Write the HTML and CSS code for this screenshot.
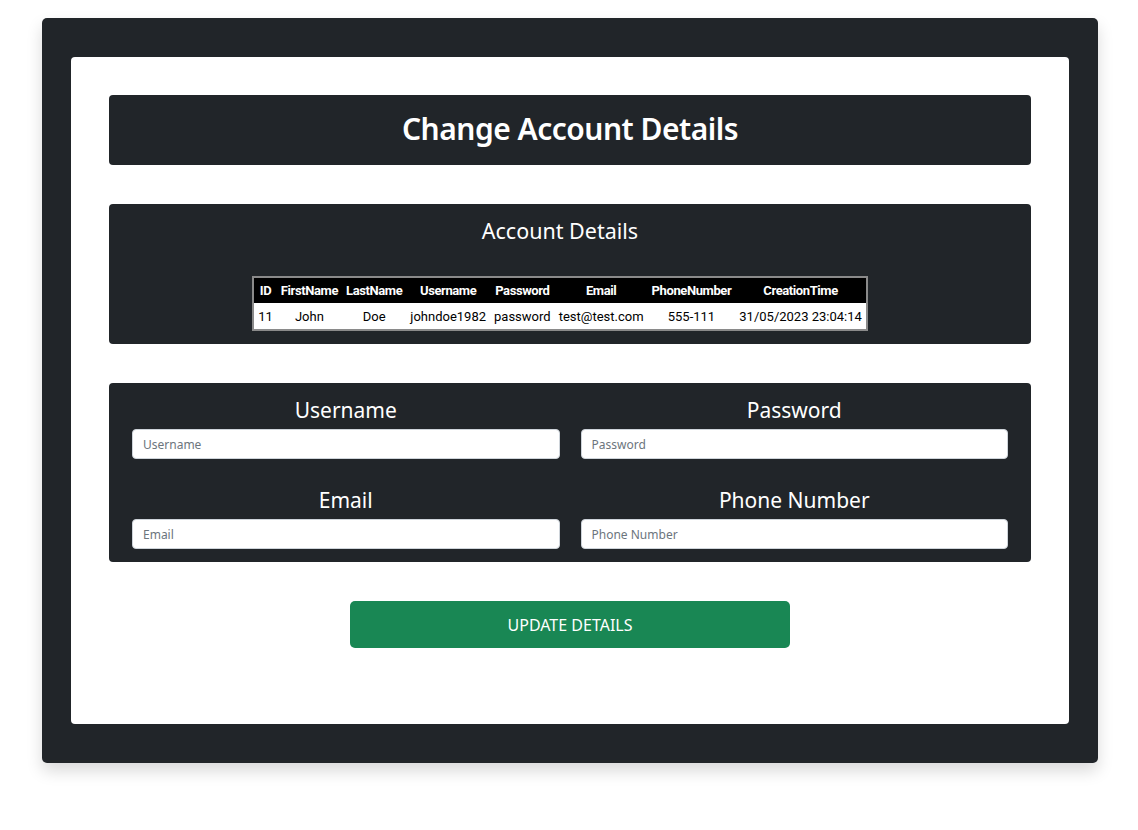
FILE: index.html
```html
<!DOCTYPE html>
<html>
<head>
<meta charset="utf-8">
<link rel="stylesheet" href="styles.css">
</head>
<body>
<div class="outer">
  <div class="inner">
    <div class="title-box"><h1>Change Account Details</h1></div>
    <div class="details-box">
      <h2>Account Details</h2>
      <table class="acct">
        <thead>
          <tr><th>ID</th><th>FirstName</th><th>LastName</th><th>Username</th><th>Password</th><th>Email</th><th>PhoneNumber</th><th>CreationTime</th></tr>
        </thead>
        <tbody>
          <tr><td>11</td><td>John</td><td>Doe</td><td>johndoe1982</td><td>password</td><td>test@test.com</td><td>555-111</td><td>31/05/2023 23:04:14</td></tr>
        </tbody>
      </table>
    </div>
    <div class="form-box">
      <div class="field"><label>Username</label><input type="text" placeholder="Username"></div>
      <div class="field"><label>Password</label><input type="text" placeholder="Password"></div>
      <div class="field"><label>Email</label><input type="text" placeholder="Email"></div>
      <div class="field"><label>Phone Number</label><input type="text" placeholder="Phone Number"></div>
    </div>
    <div class="btn-row"><button class="btn">UPDATE DETAILS</button></div>
  </div>
</div>
</body>
</html>
```
FILE: styles.css
```css
* { box-sizing: border-box; }
body {
  margin: 0;
  padding: 18px 0 40px;
  background: #fff;
  font-family: "Noto Sans", "Open Sans", sans-serif;
  color: #fff;
}
.outer {
  margin: 0 40px 0 42px;
  width: 1056px;
  background: #212529;
  border-radius: 5px;
  padding: 39px 29px;
  box-shadow: 0 8px 16px rgba(0,0,0,0.15);
}
.inner {
  background: #fff;
  border-radius: 4px;
  padding: 38px 38px 76px;
}
.title-box {
  background: #212529;
  border-radius: 4px;
  height: 70px;
  display: flex;
  align-items: center;
  justify-content: center;
}
h1 {
  margin: 0 0 4px;
  font-size: 30px;
  font-weight: 600;
  letter-spacing: -0.5px;
}
.details-box {
  margin-top: 39px;
  background: #212529;
  border-radius: 4px;
  padding: 12px 20px 13px 0;
  display: flex;
  flex-direction: column;
  align-items: center;
}
h2 {
  margin: 0 0 30px;
  font-size: 21.5px;
  font-weight: 400;
  line-height: 30px;
}
.acct {
  border-collapse: collapse;
  border: 2px solid #8a8a8a;
  font-family: "Roboto", "Liberation Sans", sans-serif;
  font-size: 13px;
}
.acct th {
  background: #000;
  color: #fff;
  font-weight: 700;
  letter-spacing: -0.4px;
  height: 26px;
  padding: 0 4px;
  text-align: center;
}
.acct td {
  background: #fff;
  color: #000;
  height: 27px;
  padding: 0 4px;
  text-align: center;
}
.acct td:first-child { text-align: left; }
.form-box {
  margin-top: 39px;
  background: #212529;
  border-radius: 4px;
  padding: 12px 23px 13px;
  display: grid;
  grid-template-columns: 1fr 1fr;
  column-gap: 21px;
  row-gap: 26px;
}
.field {
  display: flex;
  flex-direction: column;
  align-items: stretch;
}
.field label {
  text-align: center;
  font-size: 21px;
  line-height: 30px;
  margin-bottom: 4px;
}
.field input {
  height: 30px;
  border: 1px solid #ced4da;
  border-radius: 4px;
  padding: 0 10px;
  font-family: "Noto Sans", sans-serif;
  font-size: 12px;
  color: #212529;
}
.field input::placeholder { color: #6c757d; }
.btn-row {
  margin-top: 39px;
  display: flex;
  justify-content: center;
}
.btn {
  width: 440px;
  height: 47px;
  background: #198754;
  color: #fff;
  border: none;
  border-radius: 5px;
  font-family: "Noto Sans", sans-serif;
  font-size: 16px;
}
```
